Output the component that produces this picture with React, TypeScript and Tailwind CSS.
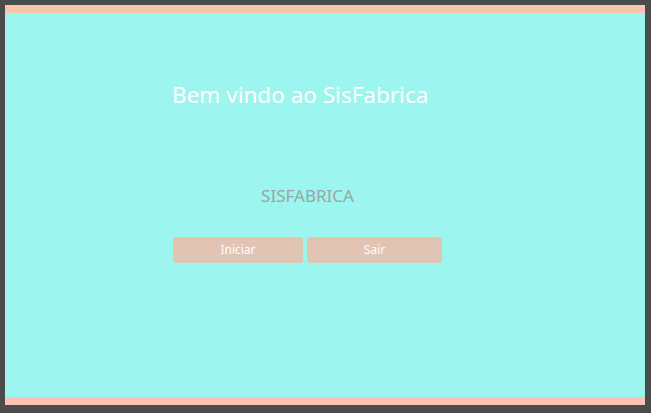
export default function App() {
  return (
    <div className="w-[651px] h-[413px] bg-[#4b4b4b] pl-[5px] pt-[5px] pr-[6px] pb-[8px]" style={{ fontFamily: '"Noto Sans", "Open Sans", sans-serif' }}>
      <div className="flex h-full flex-col">
        <div className="h-[8px] bg-[#f8c6ae]" />
        <main className="flex-1 bg-[#9df5f0] pl-[168px] pt-[67px]">
          <div className="w-[269px]">
            <h1 className="text-[22.5px] leading-[30px] text-white -ml-[1px]">Bem vindo ao SisFabrica</h1>
            <p className="mt-[74px] text-center text-[17px] leading-[24px] text-[#9aa5a3]">SISFABRICA</p>
            <div className="mt-[29px] flex gap-[4px]">
              <button className="h-[26px] w-[130px] rounded-[3px] bg-[#e1c4b4] text-[12px] text-white">Iniciar</button>
              <button className="h-[26px] w-[135px] rounded-[3px] bg-[#e1c4b4] text-[12px] text-white">Sair</button>
            </div>
          </div>
        </main>
        <div className="h-[8px] bg-[#f8c6ae]" />
      </div>
    </div>
  )
}
